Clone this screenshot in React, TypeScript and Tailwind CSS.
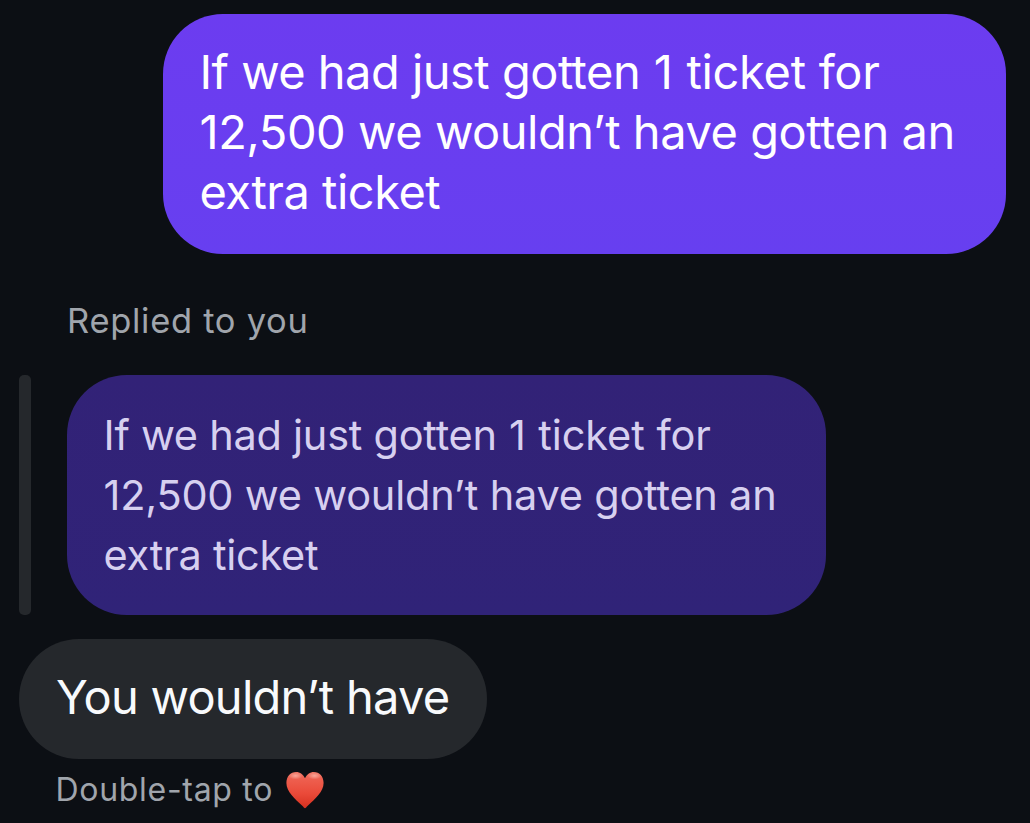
type Part = { text: string; className: string }

const sentLines: Part[][] = [
  [
    { text: 'If we had just gotten', className: 'tracking-[-0.52px]' },
    { text: ' 1', className: 'tracking-[0.5px]' },
    { text: ' ticket for', className: 'tracking-[-0.3px]' }
  ],
  [{ text: '12,500 we wouldn’t have gotten an', className: 'tracking-[-0.46px]' }],
  [{ text: 'extra ticket', className: 'tracking-[-0.5px]' }]
]

const quotedLines: Part[][] = [
  [
    { text: 'If we had just gotten', className: 'tracking-[-0.26px]' },
    { text: ' 1', className: 'tracking-[0.6px]' },
    { text: ' ticket for', className: 'tracking-[-0.05px]' }
  ],
  [{ text: '12,500 we wouldn’t have gotten an', className: 'tracking-[-0.22px]' }],
  [{ text: 'extra ticket', className: 'tracking-[-0.25px]' }]
]

function Lines({ lines }: { lines: Part[][] }) {
  return (
    <>
      {lines.map((line, i) => (
        <p key={i} className="whitespace-pre">
          {line.map((part) => (
            <span key={part.text} className={part.className}>{part.text}</span>
          ))}
        </p>
      ))}
    </>
  )
}

function Heart() {
  return (
    <svg className="mt-px h-[38px] w-[38px]" viewBox="0 0 38 38" aria-hidden="true">
      <defs>
        <linearGradient id="heartFill" x1="0" y1="0" x2="0" y2="1">
          <stop offset="0" stopColor="#ee7565" />
          <stop offset="0.2" stopColor="#ee5f4f" />
          <stop offset="0.6" stopColor="#ea4a39" />
          <stop offset="1" stopColor="#d5301f" />
        </linearGradient>
        <radialGradient id="heartShine" cx="0.5" cy="0.5" r="0.5">
          <stop offset="0" stopColor="#ffc0b4" stopOpacity="0.7" />
          <stop offset="1" stopColor="#ffc0b4" stopOpacity="0" />
        </radialGradient>
      </defs>
      <path
        d="M19 37.2C18.300 37.2 17.600 36.200 16 34.600C9 28 0.400 20.800 0.400 12C0.400 5.200 4.600 0.900 10 0.900C14.300 0.900 17.300 3.500 19 7.200C20.700 3.500 23.700 0.900 28 0.900C33.400 0.900 37.600 5.200 37.600 12C37.600 20.800 29 28 22 34.600C20.400 36.200 19.700 37.200 19 37.200Z"
        fill="url(#heartFill)"
      />
      <ellipse cx="9.500" cy="4.800" rx="7" ry="3.600" fill="url(#heartShine)" />
      <ellipse cx="28.500" cy="4.800" rx="7" ry="3.600" fill="url(#heartShine)" />
    </svg>
  )
}

function App() {
  return (
    <div className="flex h-[823px] w-[1030px] flex-col items-start overflow-hidden bg-[#0c0f14] pt-[14px] pl-[19px] font-['Inter',sans-serif] [font-feature-settings:'calt'_0]">
      <div className="mr-6 h-[240px] w-[843px] self-end rounded-[60px] bg-linear-to-b from-[#6c3cf0] to-[#673ff0] pt-[28px] pl-[36.5px] text-[47px] leading-[60px] text-white">
        <Lines lines={sentLines} />
      </div>

      <p className="mt-[46px] ml-12 h-[75px] text-[34.5px] leading-[42px] tracking-[0.7px] whitespace-nowrap text-[#a0a5ac]">Replied to you</p>

      <div className="flex gap-9">
        <div className="h-[240px] w-3 rounded-[5px] bg-[#25282c]" />
        <div className="h-[240px] w-[759px] rounded-[60px] bg-linear-to-b from-[#322277] to-[#302378] pt-[30px] pl-[36.5px] text-[41.5px] leading-[60px] text-[#d7d0f0]">
          <Lines lines={quotedLines} />
        </div>
      </div>

      <div className="mt-6 h-[120px] w-[468px] rounded-[60px] bg-[#25282c] pt-[28px] pl-[37px] text-[47px] leading-[60px] tracking-[-0.74px] whitespace-nowrap text-[#f8fafc]">
        You wouldn’t have
      </div>

      <div className="mt-[11px] ml-[36.5px] flex">
        <p className="w-[230.5px] text-[32px] leading-[40px] tracking-[0.7px] whitespace-nowrap text-[#a0a5ac]">Double-tap to</p>
        <Heart />
      </div>
    </div>
  )
}

export default App
